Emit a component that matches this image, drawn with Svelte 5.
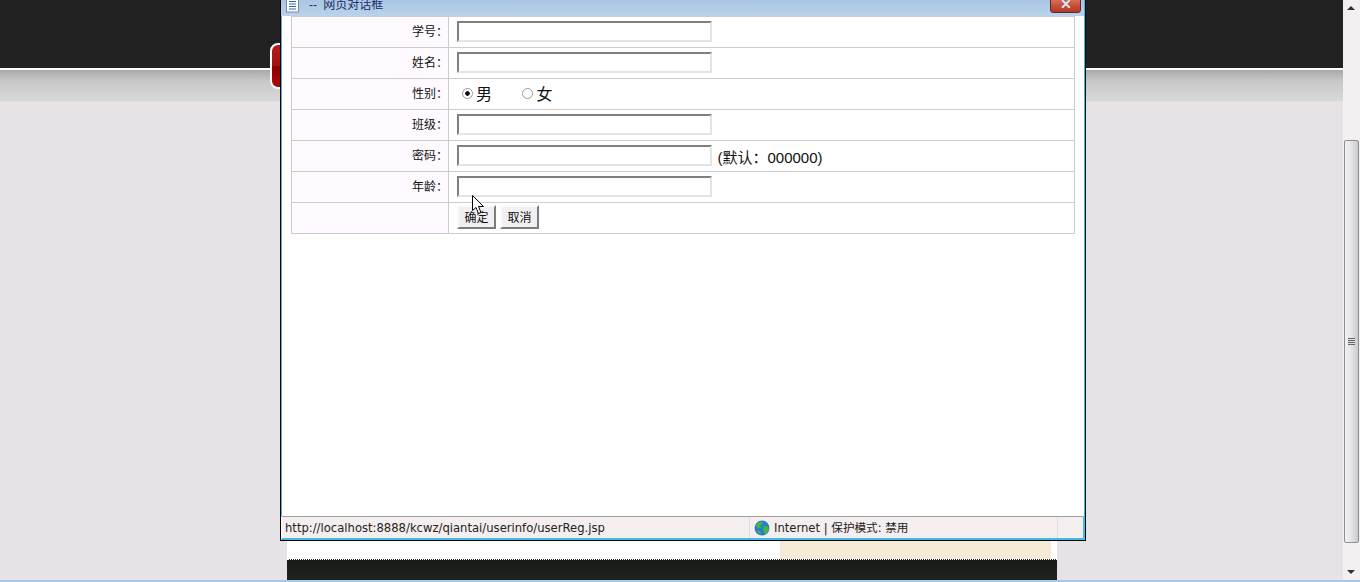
<script>
	const rows = [
		{ label: '学号：', type: 'text' },
		{ label: '姓名：', type: 'text' },
		{ label: '性别：', type: 'radio' },
		{ label: '班级：', type: 'text' },
		{ label: '密码：', type: 'text', hint: '(默认：000000)' },
		{ label: '年龄：', type: 'text' }
	];
</script>

<div class="screen">
	<div class="desk">
		<div class="page">
			<div class="topbar"></div>
			<div class="shade"></div>
			<div class="content">
				<div class="strip"><div class="tan"></div></div>
				<div class="footer"></div>
			</div>
			<div class="redtab"></div>
		</div>
		<div class="scrollbar">
			<div class="arrow up"></div>
			<div class="thumb"><div class="grip"></div></div>
			<div class="arrow down"></div>
		</div>
	</div>
	<div class="taskline"></div>

	<div class="window">
		<div class="titlebar">
			<svg class="docicon" width="14" height="13" viewBox="0 0 14 13">
				<rect x="0.5" y="-3" width="12" height="15" fill="#fff" stroke="#7d8a99" />
				<path d="M3 1.5h7M3 4h7M3 6.500h7M3 9h7" stroke="#2f62c0" fill="none" />
			</svg>
			<span class="title">-- 网页对话框</span>
			<div class="close"><span>✕</span></div>
		</div>
		<div class="body">
			<table>
				<tbody>
					{#each rows as row}
						<tr>
							<td class="label">{row.label}</td>
							<td class="field">
								{#if row.type === 'radio'}
									<label class="radio"><input type="radio" name="sex" checked />男</label>
									<label class="radio"><input type="radio" name="sex" />女</label>
								{:else}
									<input class="box" type="text" />
								{/if}
								{#if row.hint}<span class="hint">{row.hint}</span>{/if}
							</td>
						</tr>
					{/each}
					<tr>
						<td class="label"></td>
						<td class="field actions">
							<button>确定</button>
							<button>取消</button>
						</td>
					</tr>
				</tbody>
			</table>
		</div>
		<div class="statusbar">
			<div class="url">http://localhost:8888/kcwz/qiantai/userinfo/userReg.jsp</div>
			<div class="zone">
				<svg width="16" height="16" viewBox="0 0 16 16">
					<circle cx="8" cy="8" r="7.500" fill="#2a7fc8" />
					<path d="M4 2.500c2-1 4-1 5 0l-1 2-2 1 1 2-2 1-3-2 0-2zM10 6l4 .5 1 3-2 4-2 1-1-3-1-2zM3 10l3 1 1 3-2 0z" fill="#43b54a" />
				</svg>
				<span>Internet | 保护模式: 禁用</span>
			</div>
			<div class="rest"></div>
		</div>
	</div>

	<svg class="cursor" width="14" height="20" viewBox="0 0 14 20">
		<path d="M0.500 0.500v15l3.500-3 2.500 6 2.500-1-2.500-6h5z" fill="#fff" stroke="#000" />
	</svg>
</div>

<style>
	:global(body) {
		margin: 0;
		overflow: hidden;
	}

	.screen {
		position: relative;
		width: 1360px;
		height: 582px;
		overflow: hidden;
		display: flex;
		flex-direction: column;
		font-family: "Liberation Sans", "Noto Sans CJK SC", sans-serif;
	}

	.desk {
		flex: 1;
		display: flex;
		min-height: 0;
	}

	.page {
		position: relative;
		flex: 1;
		display: flex;
		flex-direction: column;
		background: #e6e2e5;
	}

	.topbar {
		height: 68px;
		background: #222;
		border-bottom: 2px solid #fff;
	}

	.shade {
		height: 32px;
		background: linear-gradient(#a8a8a8, #c8c8c8 35%, #d8d8d8 95%, #e6e2e5);
	}

	.content {
		flex: 1;
		display: flex;
		flex-direction: column;
		justify-content: flex-end;
		width: 770px;
		margin-left: 287px;
	}

	.strip {
		height: 18px;
		background: #fff;
		display: flex;
		justify-content: flex-end;
		padding-right: 6px;
	}

	.tan {
		width: 271px;
		background: #f6e9d5;
	}

	.footer {
		height: 21px;
		background: linear-gradient(#161a16, #222422);
		border-top: 1px dotted #fff;
		box-sizing: border-box;
	}

	.redtab {
		position: absolute;
		left: 270px;
		top: 43px;
		width: 14px;
		height: 46px;
		box-sizing: border-box;
		border: 2px solid #fff;
		border-radius: 8px 0 0 8px;
		background: linear-gradient(#b81c1c, #a01010 50%, #8c0000 52%, #b00808);
	}

	.scrollbar {
		width: 17px;
		background: #f3f0f1;
		display: flex;
		flex-direction: column;
		align-items: center;
		box-sizing: border-box;
		padding-top: 140px;
		position: relative;
	}

	.thumb {
		width: 15px;
		height: 403px;
		box-sizing: border-box;
		border: 1px solid #8e8e8e;
		border-radius: 2px;
		background: linear-gradient(90deg, #f1f1f3, #e8e8ea 40%, #c9c9cf);
		display: flex;
		align-items: center;
		justify-content: center;
	}

	.grip {
		width: 7px;
		height: 7px;
		background: repeating-linear-gradient(#666 0 1px, #ddd 1px 2px);
	}

	.arrow {
		position: absolute;
		left: 4px;
		width: 0;
		height: 0;
		border-left: 4px solid transparent;
		border-right: 4px solid transparent;
	}

	.arrow.up {
		top: 6px;
		border-bottom: 4px solid #333;
	}

	.arrow.down {
		top: 570px;
		border-top: 4px solid #333;
	}

	.taskline {
		height: 2px;
		background: #a5cbe8;
	}

	.window {
		position: absolute;
		left: 280px;
		top: 0;
		width: 806px;
		height: 541px;
		box-sizing: border-box;
		border: 1px solid #000;
		border-top: 0;
		background: #fff;
		display: flex;
		flex-direction: column;
	}

	.titlebar {
		height: 16px;
		flex: none;
		position: relative;
		display: flex;
		align-items: flex-start;
		background: linear-gradient(#a9c6e4, #bad2ea);
		border-right: 1px solid #45b4e6;
		overflow: hidden;
	}

	.docicon {
		margin-left: 5px;
	}

	.title {
		margin-left: 9px;
		margin-top: -2px;
		font-size: 12px;
		word-spacing: 3px;
		line-height: 14px;
		color: #1b2d62;
	}

	.close {
		position: absolute;
		right: 3px;
		top: -2px;
		width: 31px;
		height: 15px;
		box-sizing: border-box;
		border: 1px solid #5a2a2a;
		border-radius: 0 0 3px 3px;
		background: linear-gradient(#d9735f, #c9503a 50%, #b53a24);
		color: #eceaf0;
		font-size: 14px;
		line-height: 11px;
		text-align: center;
		font-weight: bold;
		text-shadow: 0 0 1px #333;
	}

	.body {
		flex: 1;
		min-height: 0;
		padding-left: 9px;
		border-left: 1px solid #45b4e6;
		border-right: 1px solid #45b4e6;
	}

	table {
		border-collapse: collapse;
		width: 784px;
		table-layout: fixed;
	}

	td {
		height: 31px;
		padding: 0;
		border: 1px solid #ccc;
		box-sizing: border-box;
	}

	.label {
		width: 157px;
		background: #fefaff;
		text-align: right;
		padding: 0 0 3px;
		font-size: 12px;
		color: #111;
	}

	.field {
		padding: 0 0 2px 8px;
		font-size: 16px;
		color: #111;
	}

	.box {
		width: 255px;
		height: 21px;
		box-sizing: border-box;
		padding: 0;
		margin: 0;
		vertical-align: middle;
		border: 2px solid;
		border-color: #808080 #e4e4e4 #e4e4e4 #808080;
		background: #fff;
	}

	.radio {
		display: inline-flex;
		align-items: center;
		margin-left: 5px;
		margin-right: 21px;
	}

	.radio input {
		appearance: none;
		width: 11px;
		height: 11px;
		margin: 0 3px 0 0;
		border: 1px solid #999;
		border-radius: 50%;
		background: #fff;
		box-sizing: border-box;
	}

	.radio input:checked {
		background: radial-gradient(circle, #111 0 2px, #fff 2.500px);
	}

	.hint {
		margin-left: 1px;
		font-size: 15px;
		vertical-align: middle;
		position: relative;
		top: 1px;
	}

	.actions {
		font-size: 0;
		padding-bottom: 2px;
	}

	button {
		width: 39px;
		height: 24px;
		margin: 0 4px 0 0;
		padding: 0 0 2px;
		font: 12px "Liberation Sans", "Noto Sans CJK SC", sans-serif;
		color: #111;
		background: #f2eff1;
		border: 2px solid;
		border-color: #fbfbfb #7c7c7c #7c7c7c #fbfbfb;
		vertical-align: middle;
	}

	.statusbar {
		height: 24px;
		flex: none;
		display: flex;
		box-sizing: border-box;
		background: #f5eeef;
		border-top: 1px solid #a0a0a0;
		border-bottom: 2px solid #3fbbe8;
		border-right: 2px solid #3fbbe8;
		border-left: 1px solid #fff;
		font-family: "DejaVu Sans", "Noto Sans CJK SC", sans-serif;
		font-size: 11.600px;
		line-height: 22px;
		color: #222;
	}

	.url {
		width: 468px;
		padding-left: 3px;
		box-sizing: border-box;
		border-right: 1px solid #ddd;
		white-space: nowrap;
	}

	.zone {
		width: 308px;
		box-sizing: border-box;
		padding-left: 4px;
		border-right: 1px solid #ddd;
		display: flex;
		align-items: center;
		gap: 4px;
		white-space: nowrap;
	}

	.rest {
		flex: 1;
	}

	.cursor {
		position: absolute;
		left: 472px;
		top: 195px;
	}
</style>
